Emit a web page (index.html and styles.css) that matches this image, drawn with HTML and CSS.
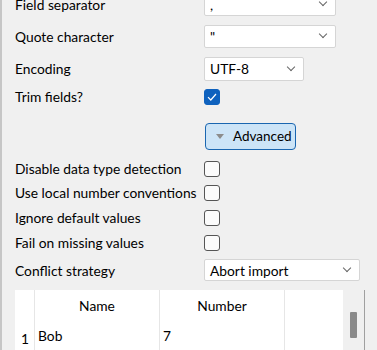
FILE: index.html
```html
<!DOCTYPE html>
<html lang="en">
<head>
    <meta charset="UTF-8">
    <meta name="viewport" content="width=device-width, initial-scale=1.0">
    <title>Import CSV</title>
    <link rel="stylesheet" href="styles.css">
</head>
<body>
    <div class="import-form">
        <div class="row row-first">
            <span class="label">Field separator</span>
            <div class="combo combo-wide"><span>,</span><span class="chevron"></span></div>
        </div>
        <div class="row row-combo">
            <span class="label">Quote character</span>
            <div class="combo combo-wide"><span>"</span><span class="chevron"></span></div>
        </div>
        <div class="row row-combo row-tall">
            <span class="label">Encoding</span>
            <div class="combo combo-short"><span>UTF-8</span><span class="chevron"></span></div>
        </div>
        <div class="row row-trim">
            <span class="label">Trim fields?</span>
            <span class="checkbox checked">
                <svg width="10" height="8" viewBox="0 0 10 8"><path d="M1 4.2 L3.8 7 L9 1" fill="none" stroke="#fff" stroke-width="1.2"/></svg>
            </span>
        </div>
        <div class="row row-advanced">
            <span class="label"></span>
            <button class="advanced-btn"><span class="triangle"></span>Advanced</button>
        </div>
        <div class="row row-check row-check-first">
            <span class="label">Disable data type detection</span>
            <span class="checkbox"></span>
        </div>
        <div class="row row-check">
            <span class="label">Use local number conventions</span>
            <span class="checkbox"></span>
        </div>
        <div class="row row-check">
            <span class="label">Ignore default values</span>
            <span class="checkbox"></span>
        </div>
        <div class="row row-check">
            <span class="label">Fail on missing values</span>
            <span class="checkbox"></span>
        </div>
        <div class="row row-conflict">
            <span class="label">Conflict strategy</span>
            <div class="combo combo-long"><span>Abort import</span><span class="chevron"></span></div>
        </div>

        <div class="preview">
            <div class="grid">
                <div class="cell head corner"></div>
                <div class="cell head">Name</div>
                <div class="cell head">Number</div>
                <div class="cell head blank"></div>
                <div class="cell rownum">1</div>
                <div class="cell">Bob</div>
                <div class="cell">7</div>
                <div class="cell blank"></div>
            </div>
            <div class="scrollbar"><div class="thumb"></div></div>
        </div>
    </div>
</body>
</html>
```

FILE: styles.css
```css
body {
    margin: 0;
    background-color: #f0f0f0;
    font-family: Lato, "Noto Sans", sans-serif;
    font-size: 13.8px;
    color: #000;
    overflow: hidden;
    height: 350px;
}

.import-form {
    display: flex;
    flex-direction: column;
    border-left: 2px solid #c6c6c6;
    padding-left: 13px;
    height: 360px;
    white-space: nowrap;
}

.row {
    display: flex;
    align-items: center;
}

.label {
    width: 189px;
    flex-shrink: 0;
}

.row-first {
    margin-top: -7px;
    height: 23px;
}

.row-combo {
    margin-top: 9px;
    height: 23px;
}

.row-tall {
    height: 24px;
}

.row-trim {
    margin-top: 5px;
    height: 22px;
}

.row-advanced {
    margin-top: 15px;
    height: 27px;
}

.row-check {
    height: 25px;
}

.row-check-first {
    margin-top: 7px;
    height: 24px;
}

.row-conflict {
    margin-top: 4px;
    height: 22px;
}

/* Combo boxes */
.combo {
    box-sizing: border-box;
    height: 100%;
    background-color: #fff;
    border: 1px solid #d5d5d5;
    border-radius: 2px;
    display: flex;
    align-items: center;
    justify-content: space-between;
    padding: 0 9px 0 5px;
}

.combo-wide {
    width: 132px;
}

.combo-short {
    width: 100px;
}

.combo-long {
    width: 156px;
}

.chevron {
    width: 5px;
    height: 5px;
    border-right: 1px solid #666;
    border-bottom: 1px solid #666;
    transform: rotate(45deg);
    margin-top: -4px;
}

/* Checkboxes */
.checkbox {
    box-sizing: border-box;
    width: 16px;
    height: 16px;
    border: 1px solid #555;
    border-radius: 3px;
    background-color: #fbfbfb;
    display: flex;
    align-items: center;
    justify-content: center;
}

.checkbox.checked {
    background-color: #0f62be;
    border-color: #0f62be;
}

/* Advanced toggle */
.advanced-btn {
    box-sizing: border-box;
    width: 91px;
    height: 27px;
    margin-left: 1px;
    background-color: #cce4f7;
    border: 1px solid #1a66b0;
    border-radius: 4px;
    font-family: inherit;
    font-size: 13.5px;
    color: #000;
    display: flex;
    align-items: center;
    padding: 0 0 0 10px;
}

.triangle {
    width: 0;
    height: 0;
    border-left: 4px solid transparent;
    border-right: 4px solid transparent;
    border-top: 5px solid #8c8c8c;
    margin-right: 9px;
    margin-top: 1px;
}

/* Preview table */
.preview {
    margin-top: 9px;
    width: 349px;
    display: flex;
    border-right: 1px solid #a0a0a0;
    height: 70px;
    flex-shrink: 0;
}

.grid {
    display: grid;
    grid-template-columns: 19px 125px 125px 59px;
    grid-template-rows: 30px 32px;
    background-color: #fff;
}

.cell {
    border-left: 1px solid #e6e6e6;
    display: flex;
    align-items: center;
    padding-left: 3px;
}

.cell.head {
    justify-content: center;
    padding-left: 0;
    padding-top: 1px;
}

.cell.corner,
.cell.rownum {
    border-left: none;
}

.cell.rownum {
    padding-left: 6px;
    padding-top: 6px;
}

.scrollbar {
    flex: 1;
    background-color: #f0f0f0;
    padding-top: 22px;
    display: flex;
    justify-content: center;
}

.thumb {
    width: 7px;
    height: 26px;
    background-color: #8a8a8a;
    border-radius: 1px;
}
```
